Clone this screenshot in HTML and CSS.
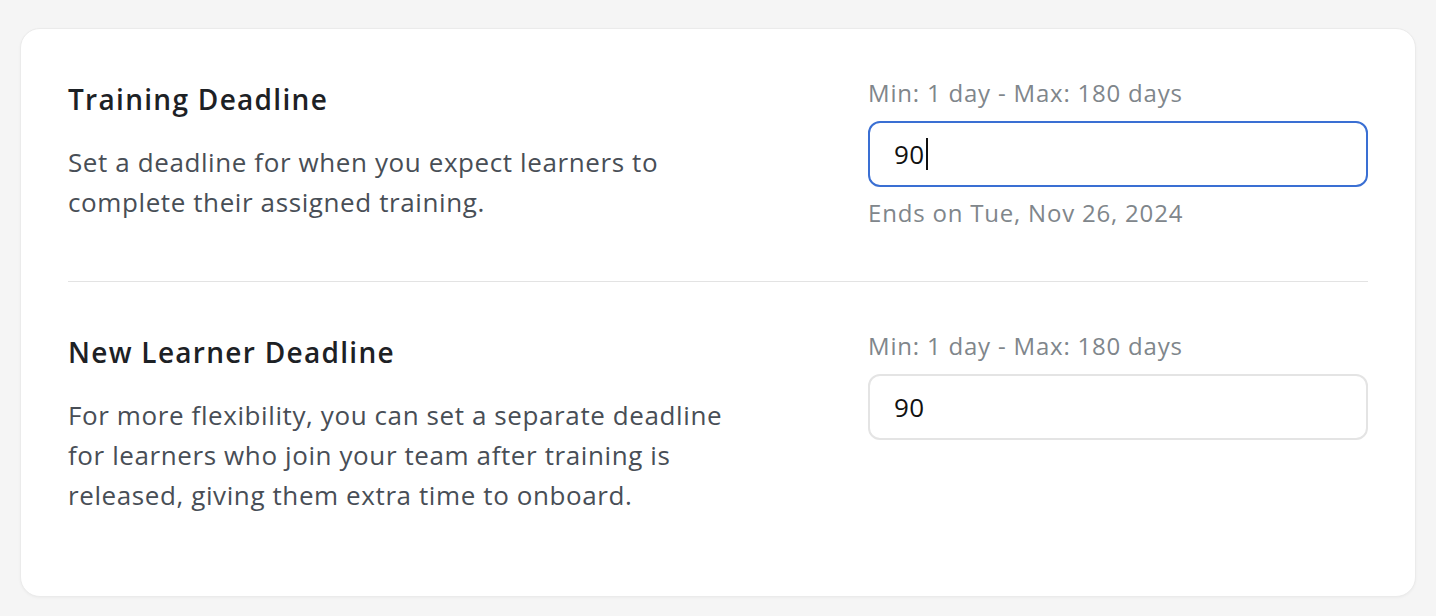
FILE: index.html
```html
<!DOCTYPE html>
<html lang="en">
<head>
<meta charset="utf-8">
<title>Deadlines</title>
<link rel="stylesheet" href="styles.css">
</head>
<body>
<div class="card">
  <section class="row">
    <div class="info">
      <h2 class="title">Training Deadline</h2>
      <p class="desc">Set a deadline for when you expect learners to<br>complete their assigned training.</p>
    </div>
    <div class="control">
      <div class="hint">Min: 1 day - Max: 180 days</div>
      <div class="field focused"><span class="value">90</span><span class="caret"></span></div>
      <div class="note">Ends on Tue, Nov 26, 2024</div>
    </div>
  </section>
  <section class="row">
    <div class="info">
      <h2 class="title">New Learner Deadline</h2>
      <p class="desc">For more flexibility, you can set a separate deadline<br>for learners who join your team after training is<br>released, giving them extra time to onboard.</p>
    </div>
    <div class="control">
      <div class="hint">Min: 1 day - Max: 180 days</div>
      <div class="field"><span class="value">90</span></div>
    </div>
  </section>
</div>
</body>
</html>
```
FILE: styles.css
```css
* { box-sizing: border-box; }
html, body { margin: 0; padding: 0; }
body {
  background: #f5f5f5;
  font-family: "Open Sans", "Noto Sans", "Liberation Sans", sans-serif;
  padding: 28px 20px 20px 20px;
}
.card {
  background: #ffffff;
  border: 1px solid #ebebeb;
  border-radius: 20px;
  box-shadow: 0 1px 3px rgba(0,0,0,0.04);
  padding: 0 47px 27px 47px;
  width: 1396px;
}
.row {
  display: grid;
  grid-template-columns: 800px 500px;
  padding: 50px 0 54px 0;
}
.row + .row { border-top: 1px solid #e3e3e3; }
.info { padding-top: 4px; }
.title {
  margin: 0;
  font-size: 28px;
  line-height: 32px;
  font-weight: 600;
  letter-spacing: 1.3px;
  color: #1d2125;
}
.desc {
  margin: 27px 0 0 0;
  font-size: 26px;
  line-height: 40px;
  letter-spacing: 0.6px;
  color: #484e56;
}
.hint, .note {
  font-size: 24px;
  line-height: 28px;
  letter-spacing: 0.8px;
  color: #80868b;
}
.field {
  margin-top: 14px;
  height: 66px;
  border: 2px solid #e4e4e4;
  border-radius: 12px;
  padding: 0 24px;
  display: flex;
  align-items: center;
  font-size: 26px;
  letter-spacing: 0.5px;
  color: #111111;
}
.field.focused { border-color: #3a6fd3; }
.caret {
  display: inline-block;
  width: 2px;
  height: 32px;
  background: #111;
  margin-left: 1px;
}
.note { margin-top: 12px; }
```
